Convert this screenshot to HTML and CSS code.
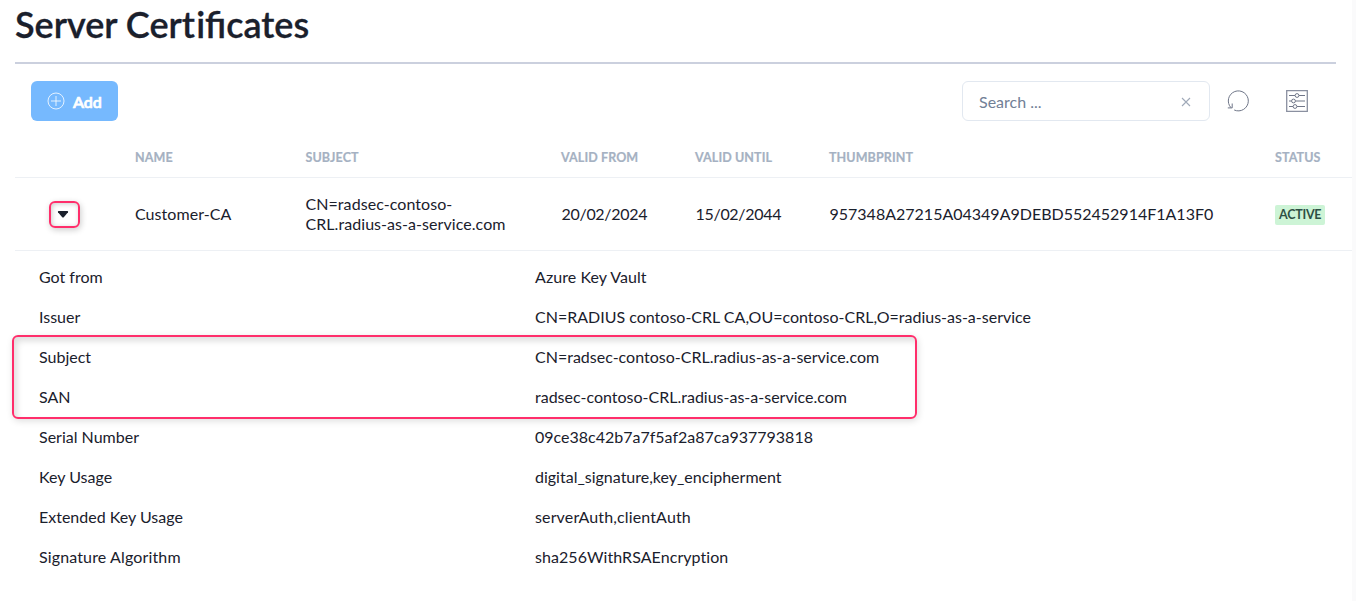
FILE: index.html
```html
<!DOCTYPE html>
<html lang="en">
<head>
<meta charset="utf-8">
<title>Server Certificates</title>
<link rel="stylesheet" href="styles.css">
</head>
<body>
<main class="page">
  <h1 class="title">Server Cer<span class="plain">t</span>ificates</h1>
  <div class="toolbar">
    <button class="add">
      <svg width="18" height="18" viewBox="0 0 18 18" fill="none" stroke="currentColor" stroke-width=".8"><circle cx="9" cy="9" r="8"/><path d="M9 4v10M4 9h10"/></svg>
      <span>Add</span>
    </button>
    <div class="search">
      <span>Search ...</span>
      <svg width="10" height="10" viewBox="0 0 10 10" fill="none" stroke="#a0a9b8" stroke-width="1.1"><path d="M1 1l8 8M9 1l-8 8"/></svg>
    </div>
    <svg class="refresh" width="22" height="22" viewBox="0 0 22 22" fill="none" stroke="#6f7688" stroke-width="1"><path d="M7.2 20A10 10 0 1 0 4 17.7M.8 17.9h4.4v-4.4"/></svg>
    <svg class="settings" width="22" height="22" viewBox="0 0 22 22" fill="none" stroke="#6f7688" stroke-width="1"><path stroke="#8a90a0" stroke-width="1.3" d="M.7.7h20.6v20.6H.7z"/><path d="M3 5.5h6M13 5.5h6M3 11h2.5M9.500 11H19M3 16.500h4M11 16.500h8"/><circle cx="11" cy="5.500" r="1.900"/><circle cx="7.500" cy="11" r="1.900"/><circle cx="9" cy="16.500" r="1.900"/></svg>
  </div>
  <div class="row head">
    <span></span><span>NAME</span><span>SUBJECT</span><span>VALID FROM</span><span>VALID UNTIL</span><span>THUMBPRINT</span><span>STATUS</span>
  </div>
  <div class="row entry">
    <span class="toggle"><svg width="12" height="7" viewBox="0 0 12 7"><path fill="#1a202c" d="M1.500 0h9q1 .2.500 1.200L7 6q-1 1-2 0L1 1.200Q.5.2 1.500 0z"/></svg></span>
    <span class="wide">Customer-CA</span>
    <span class="wide">CN=radsec-contoso-<br>CRL.radius-as-a-service.com</span>
    <span class="date">20/02/2024</span><span class="date">15/02/2044</span>
    <span class="thumb">957348A27215A04349A9DEBD552452914F1A13F0</span>
    <span><b class="badge">ACTIVE</b></span>
  </div>
  <dl class="details">
    <dt>Got from</dt><dd class="wide">Azure Key Vault</dd>
    <dt>Issuer</dt><dd>CN=RADIUS contoso-CRL CA,OU=contoso-CRL,O=radius-as-a-service</dd>
    <dt>Subject</dt><dd>CN=radsec-contoso-CRL.radius-as-a-service.com</dd>
    <dt>SAN</dt><dd>radsec-contoso-CRL.radius-as-a-service.com</dd>
    <dt>Serial Number</dt><dd>09ce38c42b7a7f5af2a87ca937793818</dd>
    <dt>Key Usage</dt><dd>digital_signature,key_encipherment</dd>
    <dt>Extended Key Usage</dt><dd class="wider">serverAuth,clientAuth</dd>
    <dt class="wider">Signature Algorithm</dt><dd class="wide">sha256WithRSAEncryption</dd>
    <div class="highlight"></div>
  </dl>
</main>
</body>
</html>
```

FILE: styles.css
```css
* { box-sizing: border-box; }
body {
  margin: 0;
  height: 601px;
  overflow: hidden;
  background: #fafafb;
  font: 16px/20px Lato, sans-serif;
  color: #1a202c;
}
.page { width: 1352px; height: 601px; padding-left: 15px; background: #fff; }
.title {
  width: 1321px;
  height: 64px;
  margin: 0;
  padding-top: 2px;
  border-bottom: 2px solid #cbd0de;
  font-size: 36px;
  line-height: 44px;
  font-weight: 600;
  letter-spacing: 0;
  -webkit-text-stroke: 0.3px currentColor;
}
.plain { letter-spacing: 1.2px; }
.wide { letter-spacing: 0.06px; }
.wider { letter-spacing: 0.14px; }
.date { letter-spacing: -0.3px; padding-left: 0.5px; }
.thumb { padding-left: 0.5px; }
.toolbar { display: flex; align-items: center; height: 73px; padding: 0 44px 0 16px; }
.add {
  display: flex;
  align-items: center;
  gap: 8px;
  width: 87px;
  height: 40px;
  padding: 0 16px;
  border: 0;
  border-radius: 6px;
  background: #76b9fe;
  color: #fff;
  font: 600 16px/20px Lato, sans-serif;
}
.add span { padding-top: 2px; -webkit-text-stroke: 0.7px currentColor; }
.search {
  display: flex;
  align-items: center;
  justify-content: space-between;
  width: 248px;
  height: 40px;
  margin-left: auto;
  padding: 2px 18px 0 16px;
  border: 1px solid #e2e8f0;
  border-radius: 6px;
  color: #718096;
}
.refresh { margin-left: 18px; margin-right: 1px; }
.search { margin-right: -1px; }
.settings { margin-left: 36px; }
.row {
  display: grid;
  grid-template-columns: 120px 170.500px 255.500px 134px 134px 446px 1fr;
  align-items: center;
  border-bottom: 1px solid #edf0f4;
}
.head {
  height: 41px;
  padding-top: 1px;
  color: #a5b1c2;
  font-size: 12.5px;
  font-weight: 700;
  letter-spacing: 0.1px;
  -webkit-text-stroke: 0.2px currentColor;
}
.entry { height: 73px; }
.toggle {
  display: flex;
  align-items: center;
  justify-content: center;
  width: 31px;
  height: 27px;
  margin-left: 34px;
  padding-right: 4px;
  border: 2px solid #ff2e6b;
  border-radius: 6px;
  box-shadow: 1px 2px 6px #0003, inset 1px 1px 5px #0003;
}
.badge {
  display: inline-block;
  height: 20px;
  padding: 0 4px;
  border-radius: 2px;
  background: #cdf4d6;
  color: #2d5045;
  font-size: 12.500px;
  letter-spacing: -0.25px;
}
.details {
  position: relative;
  display: grid;
  grid-template-columns: 496px 1fr;
  grid-auto-rows: 40px;
  align-items: center;
  margin: 0;
  padding: 6px 24px;
}
.details dd { margin: 0; }
.highlight {
  position: absolute;
  left: -3px;
  top: 84px;
  width: 905px;
  height: 84px;
  border: 2px solid #ff2e6b;
  border-radius: 6px;
  box-shadow: 1px 2px 7px #0002, inset 3px 4px 6px #0002;
}
```
